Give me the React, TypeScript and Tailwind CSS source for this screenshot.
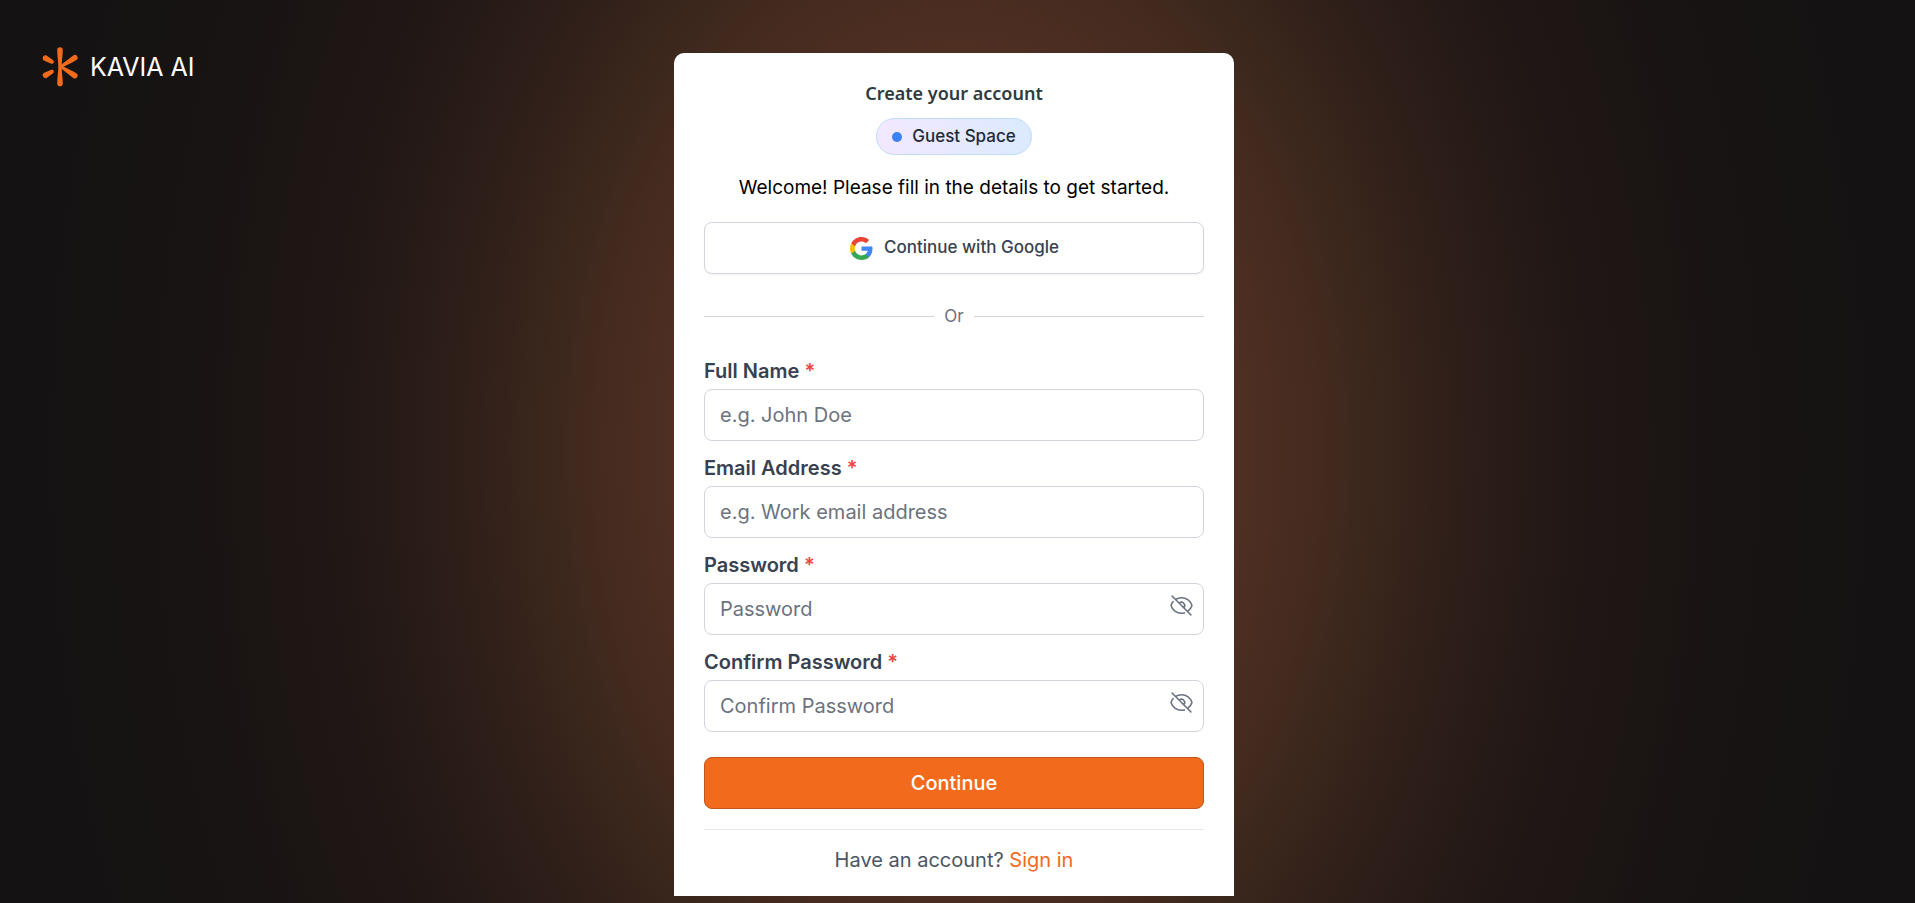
import { useState } from "react";

function Logo() {
  return (
    <svg viewBox="0 0 36 40" className="h-10 w-9" fill="#f26a1b" aria-hidden="true">
      <path d="M15.200 3a2.800 2.800 0 0 1 5.600 0c0 4.600-.9 9.400-1 14.300L31.200 8.500a2.800 2.800 0 0 1 3.200 4.600c-3.600 2.400-8.600 4.500-12.600 6.600 4 2.100 9 4.200 12.600 6.600a2.800 2.800 0 0 1-3.200 4.600L19.800 22.100c.1 4.900 1 9.700 1 14.300a2.800 2.800 0 0 1-5.600 0c0-5.800 1.100-11.100 1.100-16.700S15.200 8.800 15.200 3z" />
      <path d="M4.600 8.600l6.200 4.500a2 2 0 0 1-2 3.500L1.700 13.400a2.850 2.850 0 0 1 2.900-4.800z" />
      <path d="M4.600 30.900l6.200-4.500a2 2 0 0 0-2-3.500L1.700 26.100a2.850 2.850 0 0 0 2.900 4.800z" />
    </svg>
  );
}

function GoogleIcon() {
  return (
    <svg viewBox="0 0 24 24" className="size-[25px]" aria-hidden="true">
      <path fill="#4285F4" d="M22.56 12.25c0-.78-.07-1.53-.2-2.25H12v4.26h5.92c-.26 1.37-1.04 2.53-2.21 3.31v2.77h3.57c2.08-1.92 3.28-4.74 3.28-8.09z" />
      <path fill="#34A853" d="M12 23c2.97 0 5.46-.98 7.28-2.66l-3.57-2.77c-.98.66-2.23 1.06-3.71 1.06-2.86 0-5.29-1.93-6.16-4.53H2.18v2.84C3.99 20.53 7.7 23 12 23z" />
      <path fill="#FBBC05" d="M5.84 14.09c-.22-.66-.35-1.36-.35-2.09s.13-1.43.35-2.09V7.07H2.18C1.43 8.55 1 10.22 1 12s.43 3.45 1.18 4.93l3.66-2.84z" />
      <path fill="#EA4335" d="M12 5.38c1.62 0 3.06.56 4.21 1.64l3.15-3.15C17.45 2.09 14.97 1 12 1 7.7 1 3.99 3.47 2.18 7.07l3.66 2.84c.87-2.6 3.3-4.53 6.16-4.53z" />
    </svg>
  );
}

function EyeOff() {
  return (
    <svg viewBox="0 0 24 24" className="size-[25px]" fill="none" stroke="currentColor" strokeWidth="1.5" strokeLinecap="round" strokeLinejoin="round" aria-hidden="true">
      <path d="M3.98 8.223A10.477 10.477 0 0 0 1.934 12C3.226 16.338 7.244 19.5 12 19.5c.993 0 1.953-.138 2.863-.395M6.228 6.228A10.451 10.451 0 0 1 12 4.5c4.756 0 8.773 3.162 10.065 7.498a10.522 10.522 0 0 1-4.293 5.774M6.228 6.228 3 3m3.228 3.228 3.65 3.65m7.894 7.894L21 21m-3.228-3.228-3.65-3.65m0 0a3 3 0 1 0-4.243-4.243m4.242 4.242L9.88 9.88" />
    </svg>
  );
}

type FieldProps = { id: string; label: string; placeholder: string; type?: string };

function Field({ id, label, placeholder, type = "text" }: FieldProps) {
  const [shown, setShown] = useState(false);
  const secret = type === "password";
  return (
    <div className="flex flex-col gap-1">
      <label htmlFor={id} className="text-xl leading-7 font-semibold text-[#374151]">
        {label} <span className="text-[#ef4444]">*</span>
      </label>
      <div className="relative">
        <input
          id={id}
          type={secret && shown ? "text" : type}
          placeholder={placeholder}
          className="h-13 w-full rounded-lg border border-[#d1d5db] bg-white px-[15px] text-xl text-[#111827] placeholder:text-[#6b7280]"
        />
        {secret && (
          <button
            type="button"
            aria-label="Toggle password visibility"
            onClick={() => setShown(!shown)}
            className="absolute top-2.5 right-2.5 text-[#6b7280]"
          >
            <EyeOff />
          </button>
        )}
      </div>
    </div>
  );
}

export default function App() {
  return (
    <div className="relative min-h-screen bg-[radial-gradient(960px_1340px_at_50%_50%,#50301f_0%,#4e2f22_30%,#472b20_36%,#3b271c_43%,#31201a_50%,#221816_63%,#191413_78%,#141213_100%)] pb-[7px] font-['Inter',sans-serif]">
      <a href="#" className="absolute top-[47px] left-[42px] flex items-center gap-3 text-white">
        <Logo />
        <span className="text-[25px] leading-10 font-normal">KAVIA AI</span>
      </a>
      <div className="flex justify-center pt-[53px] pr-[7px]">
        <main className="flex w-full max-w-[560px] flex-col rounded-t-[10px] bg-white px-[30px] pt-[26px] pb-[22px]">
          <h1 className="text-center font-['Noto_Sans',sans-serif] text-lg leading-7 font-semibold text-[#2f3a3f]">Create your account</h1>
          <div className="mt-[11px] flex justify-center">
            <div className="flex h-[37px] items-center gap-2.5 rounded-full border border-[#bfdbfe] bg-linear-to-r from-[#f3e8ff] to-[#dbeafe] px-[15px] text-[17px] font-medium text-[#1f2937]">
              <span className="size-2.5 rounded-full bg-[#3b82f6]" />
              Guest Space
            </div>
          </div>
          <p className="mt-[19px] text-center text-[19px] leading-7 text-black">Welcome! Please fill in the details to get started.</p>
          <button type="button" className="mt-5 flex h-13 items-center justify-center gap-2.5 rounded-lg border border-[#d1d5db] bg-white text-[17px] font-medium text-[#374151] shadow-xs">
            <GoogleIcon />
            Continue with Google
          </button>
          <div className="mt-7 flex items-center gap-2.5 text-[17px] leading-7 text-[#6b7280]">
            <span className="h-px flex-1 bg-[#d1d5db]" />
            Or
            <span className="h-px flex-1 bg-[#d1d5db]" />
          </div>
          <form className="mt-[27px] flex flex-col gap-[13px]" onSubmit={(e) => e.preventDefault()}>
            <Field id="name" label="Full Name" placeholder="e.g. John Doe" />
            <Field id="email" label="Email Address" placeholder="e.g. Work email address" type="email" />
            <Field id="password" label="Password" placeholder="Password" type="password" />
            <Field id="confirm" label="Confirm Password" placeholder="Confirm Password" type="password" />
            <button type="submit" className="mt-3 h-13 rounded-lg border border-[#c2551b] bg-[#f26a1b] text-xl font-medium text-white">Continue</button>
          </form>
          <p className="mt-5 border-t border-[#e5e7eb] pt-4 text-center text-xl leading-7 text-[#4b5563]">
            Have an account? <a href="#" className="text-[#f26a1b]">Sign in</a>
          </p>
        </main>
      </div>
    </div>
  );
}
